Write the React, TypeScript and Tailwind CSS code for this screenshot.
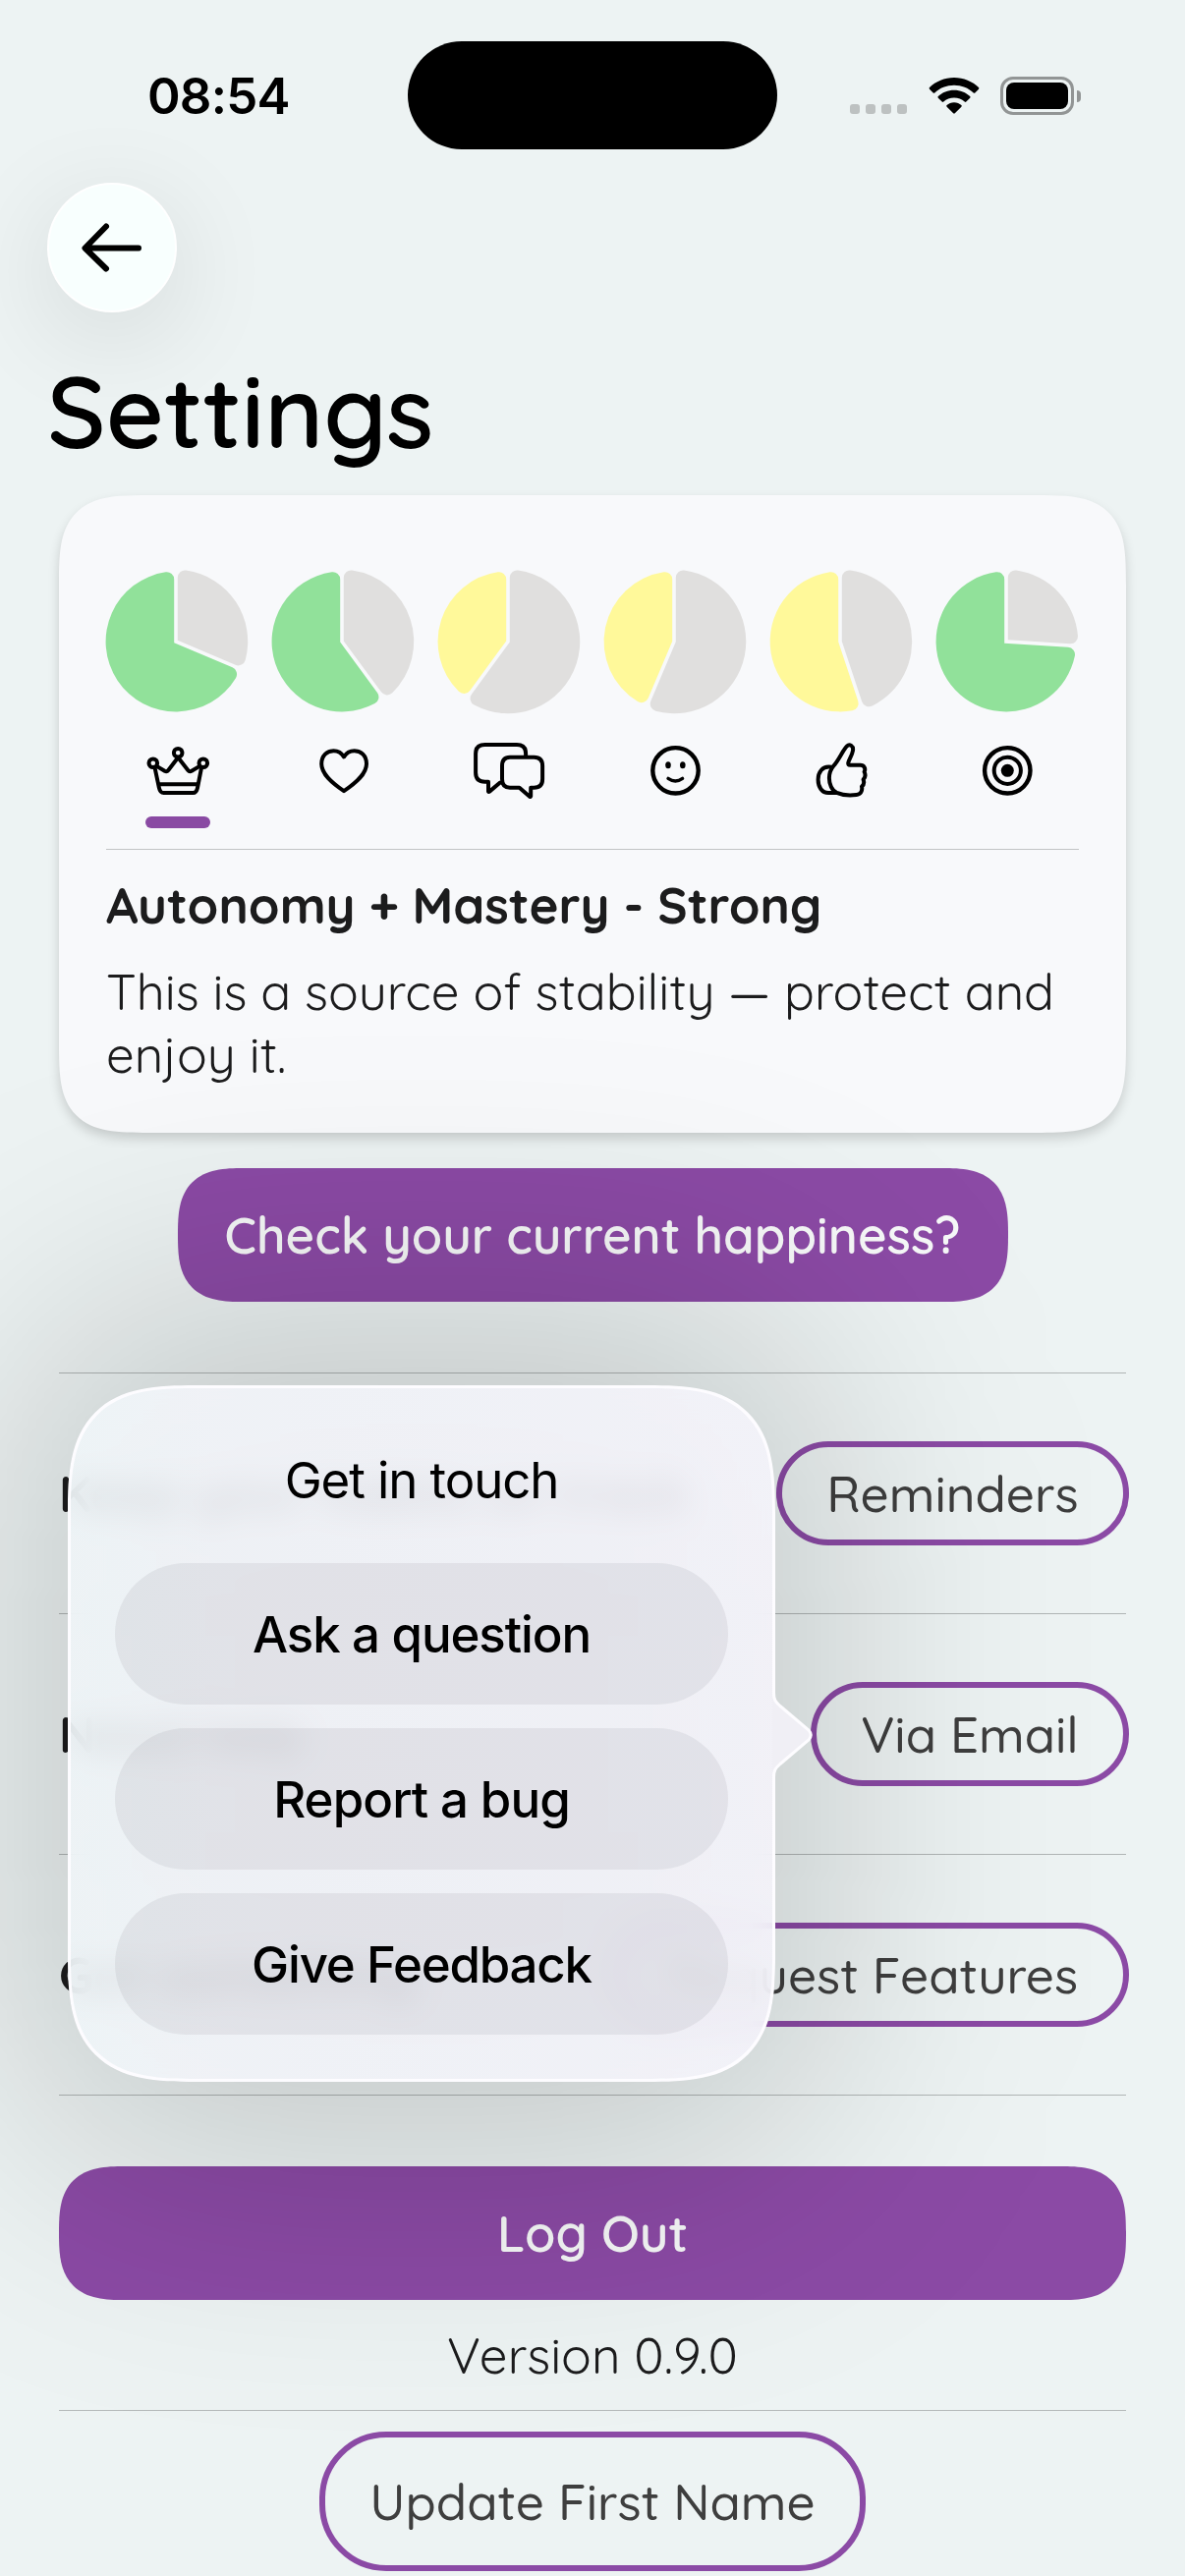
import type { ReactNode } from "react";

const QUICK = "font-['Quicksand','Lato',sans-serif]";
const SYSTEM = "font-['Inter',sans-serif]";

/* Continuous corners where the browser has them, plain round corners elsewhere. */
const CARD_CORNERS =
  "rounded-[70px] supports-[corner-shape:squircle]:rounded-[92px] supports-[corner-shape:squircle]:[corner-shape:superellipse(1.7)]";
const BUTTON_CORNERS =
  "rounded-[56px] supports-[corner-shape:squircle]:rounded-[67px] supports-[corner-shape:squircle]:[corner-shape:superellipse(1.5)]";
const POPOVER_CORNERS =
  "rounded-[98px] supports-[corner-shape:squircle]:rounded-[130px] supports-[corner-shape:squircle]:[corner-shape:superellipse(1.53)]";

type Slice = { from: number; to: number; radius: number; color: string };

/** Pie slice with an inset along both straight edges and rounded outer corners. */
function slicePath({ from, to, radius: R }: Slice) {
  const cx = 71;
  const cy = 73;
  const inset = 1.8;
  const r = 7.5;
  const rad = (deg: number) => ((deg - 90) * Math.PI) / 180;
  const dir = (a: number) => [Math.cos(a), Math.sin(a)];
  const a = rad(from);
  const b = rad(to);
  const s = Math.sqrt((R - r) ** 2 - (inset + r) ** 2);
  const [ax, ay] = dir(a);
  const [bx, by] = dir(b);
  const na = [-ay, ax];
  const nb = [by, -bx];
  const mid = dir((a + b) / 2);
  const v = inset / Math.sin((b - a) / 2);
  const ca = [ax * s + na[0] * (inset + r), ay * s + na[1] * (inset + r)];
  const cb = [bx * s + nb[0] * (inset + r), by * s + nb[1] * (inset + r)];
  const k = R / (R - r);
  const p = (x: number, y: number) => `${(cx + x).toFixed(2)} ${(cy + y).toFixed(2)}`;
  const large = to - from > 190 ? 1 : 0;
  return [
    `M${p(mid[0] * v, mid[1] * v)}`,
    `L${p(ax * s + na[0] * inset, ay * s + na[1] * inset)}`,
    `A${r} ${r} 0 0 1 ${p(ca[0] * k, ca[1] * k)}`,
    `A${R} ${R} 0 ${large} 1 ${p(cb[0] * k, cb[1] * k)}`,
    `A${r} ${r} 0 0 1 ${p(bx * s + nb[0] * inset, by * s + nb[1] * inset)}`,
    "Z",
  ].join("");
}

function Pie({ angle, color }: { angle: number; color: string }) {
  const slices: Slice[] = [
    { from: 0, to: angle, radius: 73.2, color: "#e0dfde" },
    { from: angle, to: 360, radius: 71.4, color },
  ];
  return (
    <svg width="145" height="146" viewBox="0 0 145 146" className="block overflow-visible">
      {slices.map((s) => (
        <path key={s.from} d={slicePath(s)} fill={s.color} />
      ))}
    </svg>
  );
}

function Icon({ children }: { children: ReactNode }) {
  return (
    <svg
      width="72"
      height="60"
      viewBox="0 0 72 60"
      fill="none"
      stroke="#000"
      strokeWidth="4"
      strokeLinejoin="round"
      strokeLinecap="round"
      className="mt-[29px] block overflow-visible"
    >
      {children}
    </svg>
  );
}

const icons = {
  crown: (
    <Icon>
      <circle cx="10.8" cy="21.7" r="4.3" />
      <circle cx="36.2" cy="11.3" r="4.3" />
      <circle cx="61.8" cy="21.7" r="4.3" />
      <path d="M15.3 25.4 22.6 29.8Q24.8 31 26.3 29L36.2 16 46.3 29Q47.8 31 50 29.8L57.3 25.4" />
      <path d="M12.6 26.6 16.9 46.8Q18 52 21.6 52H51.4Q55 52 56 46.8L60 26.6M17 43.3H56" />
    </Icon>
  ),
  heart: (
    <Icon>
      <path d="M36 50.2C24 42 13.2 33 13.2 22.5C13.2 14 19 9.2 25.5 9.2C30.5 9.2 34 12 36 15.4C38 12 41.7 9.2 46.7 9.2C53.2 9.2 59 14 59 22.5C59 33 48 42 36 50.2Z" />
    </Icon>
  ),
  chat: (
    <Icon>
      <path d="M52.1 14V12Q52.1 3 43 3H10.5Q1.1 3 1.1 12V31.5Q1.1 40.7 10.5 40.7H14V50.6Q14.4 51.2 15.2 50.6L26 41.5" />
      <path d="M36 15.7H60.5Q69.1 15.7 69.1 24.5V38Q69.1 46.700 60.5 46.7H57.2V55.4Q57 56.4 56 55.8L45.600 46.7H36Q28 46.7 28 38V24.5Q28 15.700 36 15.700Z" />
    </Icon>
  ),
  smile: (
    <Icon>
      <circle cx="35.5" cy="29.3" r="23.2" strokeWidth="4.4" />
      <ellipse cx="28" cy="23.7" rx="2.8" ry="3.5" fill="#000" stroke="none" />
      <ellipse cx="42.8" cy="23.7" rx="2.8" ry="3.5" fill="#000" stroke="none" />
      <path d="M28 37.4Q35.4 42.6 42.6 37.4" strokeWidth="3.4" />
    </Icon>
  ),
  thumb: (
    <Icon>
      <path d="M25 25.8C15.5 24.3 11.6 31.5 11.6 38.5C11.6 46 15.5 52.3 22.6 52H30" />
      <path d="M41 4.4C43.5 1.9 47.8 4.1 47 9C46.2 14 43 18 42.3 21.3C42 23 42.6 23.8 44.2 23.8H54.5C58.5 23.8 60.3 27.5 58.6 30.6C59.9 33.1 59.7 36.3 57.6 38.5C58.6 41 58.2 43.8 56 45.6C57 50 55 53.6 50.6 54C43 55 35.5 54 30.5 51.8C25.6 49.5 22.9 43 22.9 37C22.9 31.5 24 28.6 27.2 24.8C33.8 17 36.5 8.8 41 4.4Z" />
    </Icon>
  ),
  target: (
    <Icon>
      <circle cx="35.3" cy="29.3" r="23.2" strokeWidth="4.4" />
      <circle cx="35.3" cy="29.3" r="13.6" />
      <circle cx="35.3" cy="29.3" r="6.5" fill="#000" stroke="none" />
    </Icon>
  ),
};

const scores = [
  { icon: icons.crown, angle: 113, color: "#91e19a", selected: true },
  { icon: icons.heart, angle: 143.7, color: "#91e19a", selected: false },
  { icon: icons.chat, angle: 216.2, color: "#fff99a", selected: false },
  { icon: icons.smile, angle: 202.9, color: "#fff99a", selected: false },
  { icon: icons.thumb, angle: 161.6, color: "#fff99a", selected: false },
  { icon: icons.target, angle: 93.6, color: "#91e19a", selected: false },
];

const rows = [
  { label: "Keep your habits on track", action: "Reminders", width: "w-[359px]" },
  { label: "Need help", action: "Via Email", width: "w-[324px]" },
  { label: "Got something", action: "Request Features", width: "w-[523px]" },
];

const choices = [
  { label: "Ask a question", tracking: "tracking-[-1.1px]" },
  { label: "Report a bug", tracking: "tracking-[-0.9px]" },
  { label: "Give Feedback", tracking: "tracking-[-1.2px]" },
];

function StatusBar() {
  return (
    <header className="flex h-[186px] items-start pl-[150px]">
      <div className={`${SYSTEM} mt-[66px] w-[265px] text-[51px] leading-[64px] font-semibold tracking-[-0.8px]`}>08:54</div>
      <div className="mt-[42px] h-[110px] w-[376px] rounded-[55px] bg-black" />
      <div className="mt-[106px] ml-[74px] flex gap-[6px]">
        {[0, 1, 2, 3].map((i) => (
          <div key={i} className="h-[10px] w-[10px] rounded-[3px] bg-[#bdc1c1]" />
        ))}
      </div>
      <svg width="52" height="38" viewBox="0 0 52 38" className="mt-[79px] ml-[22px]">
        <path d="M26 0C35.8 0 44.6 3.8 51 10.1Q51.8 10.9 51 11.7L47.3 15.5Q46.5 16.2 45.7 15.5C40.6 10.6 33.6 7.8 26 7.8S11.4 10.6 6.3 15.5Q5.5 16.2 4.7 15.5L1 11.7Q.2 10.9 1 10.1C7.4 3.8 16.2 0 26 0Z" />
        <path d="M26 12.7C32.3 12.7 38 15.1 42.2 19.1Q43 19.9 42.2 20.7L38.3 24.6Q37.5 25.3 36.7 24.6C33.9 22 30.1 20.5 26 20.5S18.1 22 15.3 24.6Q14.5 25.3 13.7 24.6L9.8 20.7Q9 19.9 9.8 19.1C14 15.1 19.7 12.7 26 12.7Z" />
        <path d="M26 25.3C28.9 25.3 31.5 26.4 33.4 28.1Q34.2 28.9 33.4 29.7L26.8 36.3Q26 37 25.2 36.3L18.6 29.7Q17.8 28.9 18.6 28.1C20.5 26.4 23.1 25.3 26 25.3Z" />
      </svg>
      <div className="mt-[78px] ml-[21px] flex items-center gap-[3px]">
        <div className="h-[39px] w-[75px] rounded-[13px] border-[3px] border-[#929595] p-[3px]">
          <div className="h-full w-full rounded-[8px] bg-black" />
        </div>
        <div className="h-[12px] w-[4px] rounded-r-[4px] bg-[#929595]" />
      </div>
    </header>
  );
}

function ScoreCard() {
  return (
    <section className={`${CARD_CORNERS} mx-[60px] h-[649px] bg-[#f8f9fb] px-[48px] pt-[76px] shadow-[0_6px_12px_rgba(0,0,0,0.16)]`}>
      <div className="flex h-[284px] justify-between">
        {scores.map((s, i) => (
          <div key={i} className="flex w-[145px] flex-col items-center">
            <Pie angle={s.angle} color={s.color} />
            {s.icon}
            {s.selected && <div className="mt-[16px] h-[12px] w-[66px] rounded-full bg-[#8a4aa3]" />}
          </div>
        ))}
      </div>
      <div className="h-px bg-[#c2c4c5]" />
      <h2 className={`${QUICK} mt-[24px] text-[51px] leading-[64px] font-bold whitespace-nowrap text-[#1c1c1d]`}>
        Autonomy + Mastery - Strong
      </h2>
      <p className={`${QUICK} mt-[24px] text-[51px] leading-[64px] font-normal whitespace-nowrap text-[#1c1c1d]`}>
        This is a source of stability — protect and
        <br />
        enjoy it.
      </p>
    </section>
  );
}

function Popover() {
  return (
    <div className="absolute top-[1410px] left-[69px] h-[709px] w-[720px]">
      <div className="absolute -inset-x-[55px] -inset-y-[90px] rounded-[180px] bg-black/17 blur-[130px]" />
      <div
        className={`${POPOVER_CORNERS} absolute inset-0 flex flex-col items-center border-[3px] border-[#fdfcff] bg-linear-to-r from-[#f0f6f9]/88 via-[#f3f5fa]/88 via-20% to-[#f5f4fb]/88 px-[45px] backdrop-blur-[16px]`}
      >
        <h3 className={`${SYSTEM} mt-[62px] h-[116px] text-[51px] leading-[64px] tracking-[-1.1px]`}>Get in touch</h3>
        <div className="flex w-full flex-col gap-[24px]">
          {choices.map((c) => (
            <button
              key={c.label}
              className={`${SYSTEM} ${c.tracking} h-[144px] w-full rounded-[72px] bg-[#787882]/12 pt-[2px] text-[51px] font-medium`}
            >
              {c.label}
            </button>
          ))}
        </div>
      </div>
      <svg width="42" height="90" viewBox="0 0 42 90" className="absolute top-[311px] left-[717px]">
        <path d="M0 0C0 8 2 10 8 15L37 40Q42 45 37 50L8 75C2 80 0 82 0 90Z" fill="#f0eff5" />
        <path d="M1.500 2C1.500 9 3 11 8 15.500L37 40Q41.500 45 37 50L8 74.500C3 79 1.500 81 1.500 88" fill="none" stroke="#fdfcff" strokeWidth="3" />
      </svg>
    </div>
  );
}

export default function App() {
  return (
    <div className="relative h-[2622px] w-[1206px] overflow-hidden bg-[#edf3f3] text-black">
      <StatusBar />
      <button className="ml-[48px] flex h-[132px] w-[132px] items-center justify-center rounded-full border-[2px] border-white bg-[#f8fffe] shadow-[0_24px_110px_rgba(0,0,0,0.11)]">
        <svg width="62" height="50" viewBox="0 0 62 50" fill="none" stroke="#000" strokeWidth="6" strokeLinecap="round" strokeLinejoin="round">
          <path d="M58 25.500H4M25 3.500 3.500 25.500 25 46.500" />
        </svg>
      </button>
      <h1 className={`${QUICK} ml-[48px] h-[186px] text-[102px] leading-[200px] font-semibold`}>Settings</h1>
      <ScoreCard />

      <main className={`${QUICK} flex flex-col px-[60px] text-[51px] leading-[64px]`}>
        <button className={`${BUTTON_CORNERS} mt-[36px] mb-[72px] h-[136px] w-[845px] self-center bg-[#8b4aa5] font-semibold text-[#f6f8f8]`}>
          Check your current happiness?
        </button>
        {rows.map((r) => (
          <div key={r.label} className="flex h-[245px] items-center justify-between border-t border-[#b0b5b5]">
            <span className="font-bold whitespace-nowrap text-[#1c1c1d]">{r.label}</span>
            <button
              className={`${r.width} -mr-[3px] h-[106px] shrink-0 rounded-[53px] border-[6px] border-[#8b4aa5] font-medium whitespace-nowrap text-[#3e3e3e]`}
            >
              {r.action}
            </button>
          </div>
        ))}
        <div className="h-px bg-[#b0b5b5]" />
        <button className={`${BUTTON_CORNERS} mt-[72px] h-[136px] w-full bg-[#8b4aa5] font-semibold text-[#f6f8f8]`}>
          Log Out
        </button>
        <div className="mt-[24px] text-center font-normal text-[#1c1c1d]">Version 0.9.0</div>
        <div className="mt-[24px] h-px bg-[#b5baba]" />
        <button className="mt-[21px] h-[142px] w-[556px] self-center rounded-[68px] border-[6px] border-[#8b4aa5] font-medium text-[#3e3e3e]">
          Update First Name
        </button>
      </main>
      <Popover />
    </div>
  );
}
